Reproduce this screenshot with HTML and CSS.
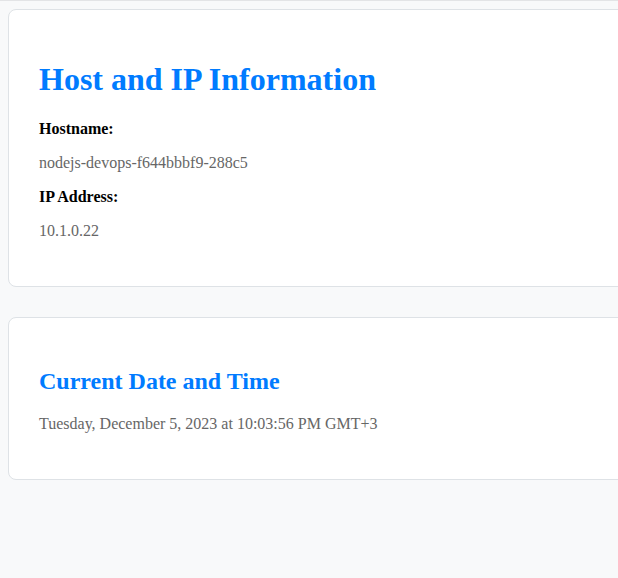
FILE: index.html
```html
<!DOCTYPE html>
<html lang="en">
<head>
<meta charset="utf-8">
<title>Host and IP Information</title>
<link rel="stylesheet" href="styles.css">
</head>
<body>
<div class="topline"></div>
<main class="page">
  <section class="card">
    <h1 class="title">Host and IP Information</h1>
    <p class="label">Hostname:</p>
    <p class="value">nodejs-devops-f644bbbf9-288c5</p>
    <p class="label">IP Address:</p>
    <p class="value">10.1.0.22</p>
  </section>
  <section class="card">
    <h2 class="subtitle">Current Date and Time</h2>
    <p class="value">Tuesday, December 5, 2023 at 10:03:56 PM GMT+3</p>
  </section>
</main>
</body>
</html>
```
FILE: styles.css
```css
html, body {
  margin: 0;
  padding: 0;
  overflow: hidden;
  background: #f8f9fa;
  font-family: "Liberation Serif", "Times New Roman", serif;
  font-size: 16px;
}
.topline {
  height: 1px;
  background: #e3e4e6;
}
.page {
  padding: 8px 0 0 8px;
}
.card {
  box-sizing: border-box;
  width: 660px;
  background: #ffffff;
  border: 1px solid #dee2e6;
  border-radius: 8px;
  padding: 30px;
  margin-bottom: 30px;
}
.title {
  color: #007bff;
  font-size: 32px;
  font-weight: bold;
  margin: 21.44px 0;
}
.subtitle {
  color: #007bff;
  font-size: 24px;
  font-weight: bold;
  margin: 19.92px 0;
}
.label {
  font-weight: bold;
  color: #000;
  margin: 16px 0;
}
.value {
  color: #666666;
  margin: 16px 0;
}
```
